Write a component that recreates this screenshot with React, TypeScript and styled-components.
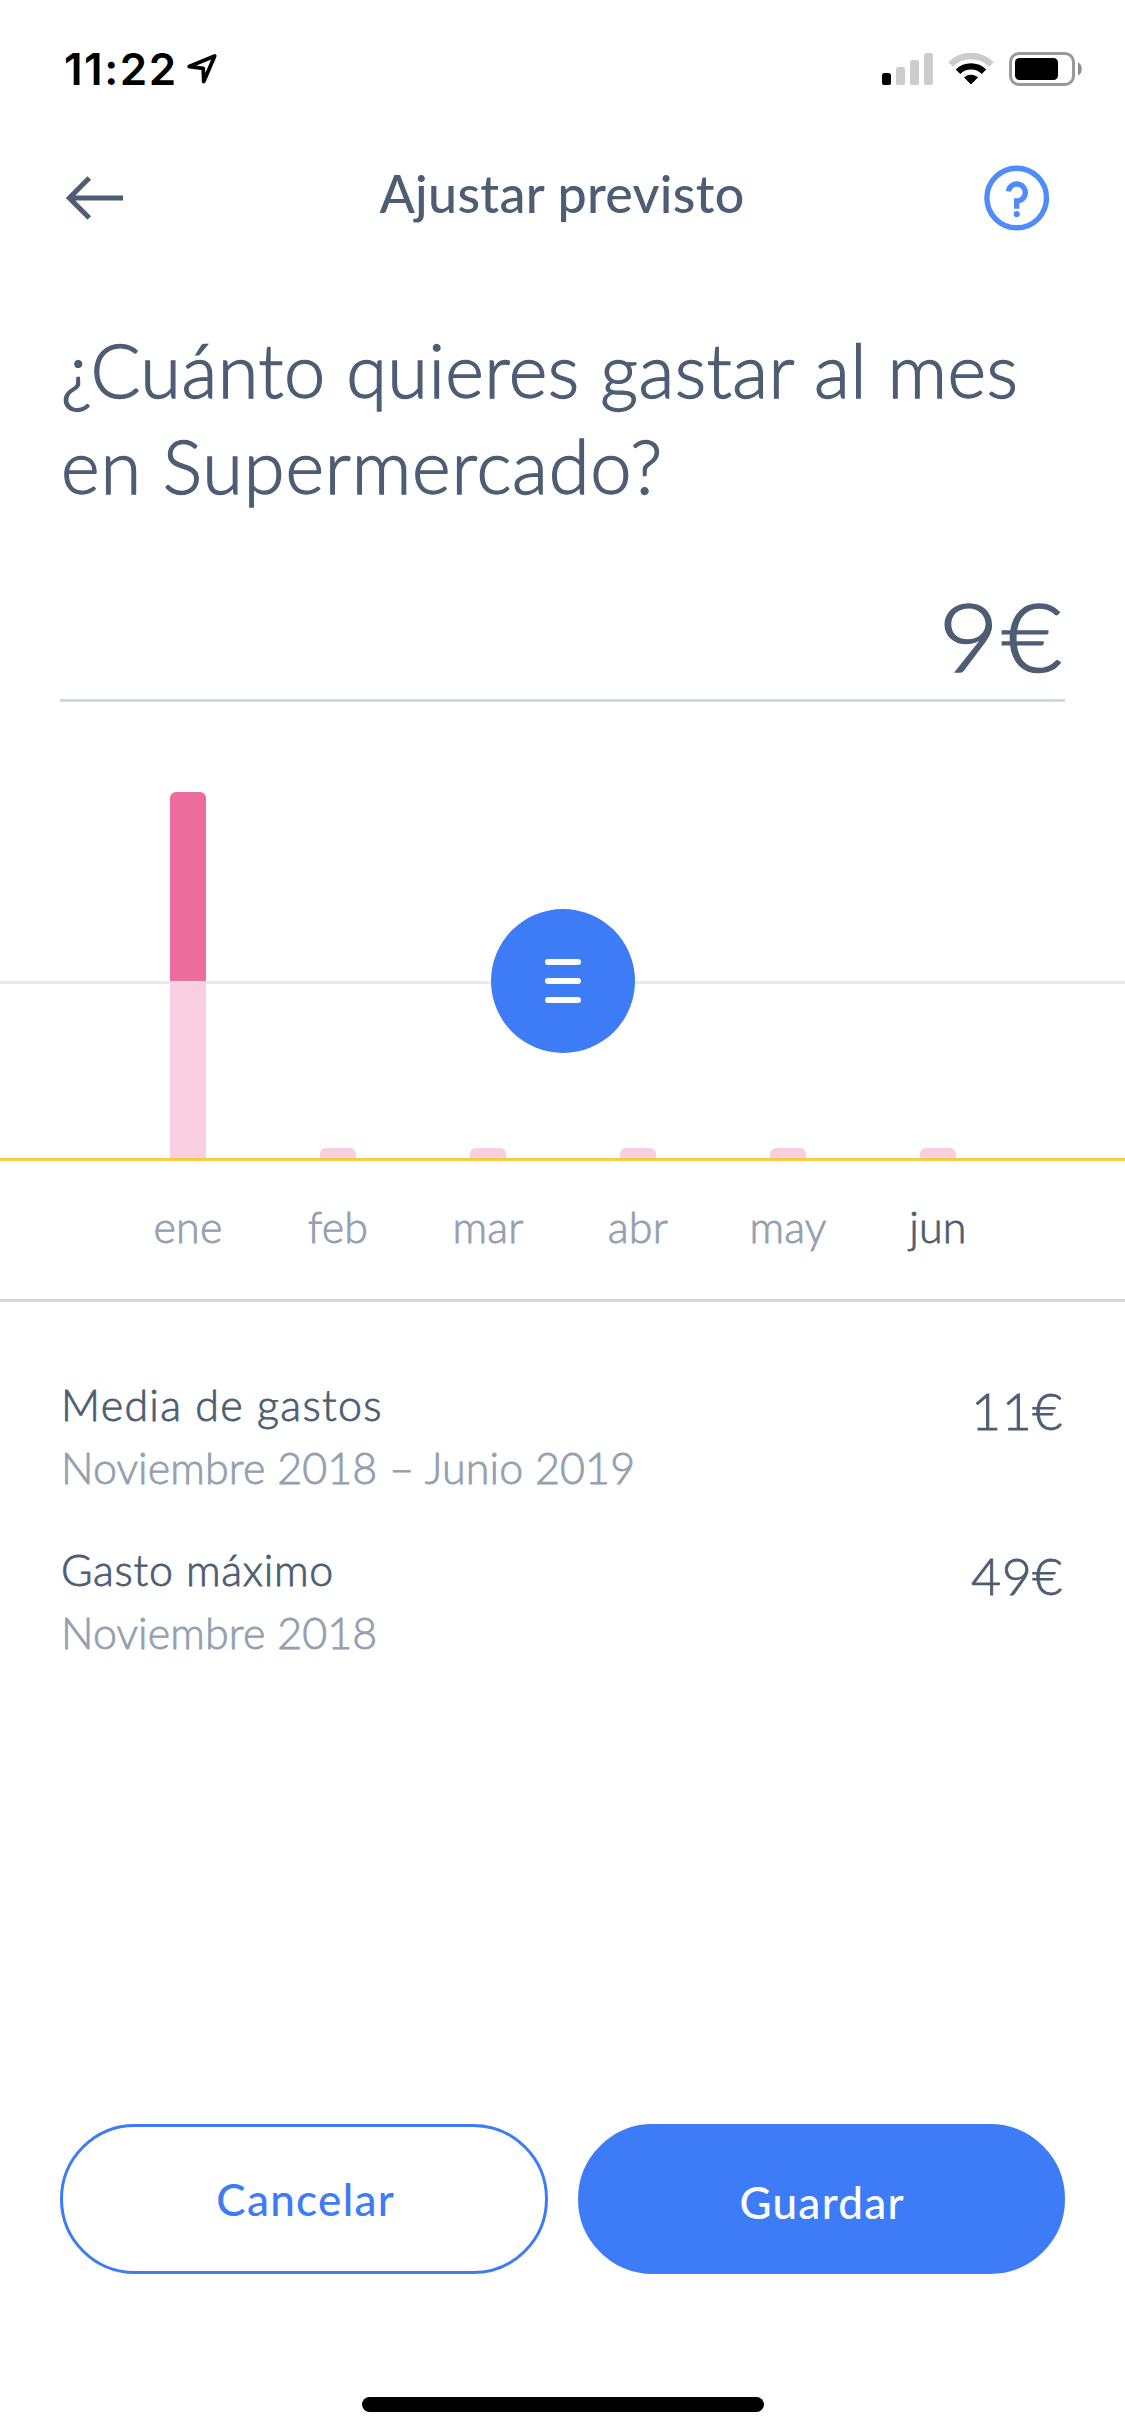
import React from 'react';
import styled, { createGlobalStyle } from 'styled-components';

const ink = '#4d5d73';
const muted = '#94a0af';
const blue = '#3d7bf7';
const divider = '#d0d7e3';

const GlobalStyle = createGlobalStyle`
  *, *::before, *::after { box-sizing: border-box; }
  body { margin: 0; background: #fff; }
`;

const Screen = styled.main`
  display: flex;
  flex-direction: column;
  width: 1125px;
  height: 2436px;
  overflow: hidden;
  background: #fff;
  color: ${ink};
  font-family: Lato, "Liberation Sans", sans-serif;
  font-weight: 300;
`;

const StatusBar = styled.div`
  display: flex;
  justify-content: space-between;
  height: 132px;
  padding: 46px 42px 0 64px;
  color: #000;
`;

const Clock = styled.div`
  display: flex;
  gap: 8px;
  font: 600 44px/46px Inter, sans-serif;
  letter-spacing: 1.5px;
`;

const LocationIcon = styled.svg`
  margin-top: 6px;
`;

const Indicators = styled.div`
  display: flex;
  align-items: flex-start;
  gap: 15px;
  padding-top: 6px;
`;

const NavBar = styled.header`
  display: grid;
  grid-template-columns: 66px 1fr 66px;
  align-items: center;
  height: 132px;
  padding: 0 75px 0 66px;
`;

const NavTitle = styled.h1`
  margin: 0;
  padding: 0 0 11px 8px;
  text-align: center;
  font-size: 52px;
  font-weight: 500;
  line-height: 60px;
  letter-spacing: 0.3px;
`;

const IconButton = styled.button`
  display: flex;
  align-items: center;
  height: 66px;
  padding: 0;
  border: 0;
  background: none;
`;

const Question = styled.h2`
  margin: 58px 60px 0 61px;
  font-size: 74px;
  font-weight: 300;
  line-height: 96px;
  -webkit-text-stroke: 1.3px ${ink};
`;

const QuestionLine = styled.span<{ $spacing: number }>`
  display: block;
  white-space: nowrap;
  letter-spacing: ${p => p.$spacing}px;
`;

const Amount = styled.div`
  display: flex;
  justify-content: flex-end;
  height: 115px;
  margin: 73px 60px 0;
  padding-right: 3px;
  border-bottom: 3px solid ${divider};
  font-size: 95px;
  line-height: 96px;
`;

const AmountValue = styled.span`
  height: 96px;
  letter-spacing: 2px;
  margin-right: -2px;
  transform: scaleX(1.1);
  transform-origin: right center;
  -webkit-text-stroke: 1.6px ${ink};
`;

const Chart = styled.section`
  border-bottom: 3px solid ${divider};
`;

const Plot = styled.div`
  position: relative;
  display: grid;
  grid-template-columns: repeat(6, 150px);
  align-items: end;
  justify-items: center;
  height: 459px;
  padding-left: 113px;
  border-bottom: 3px solid #f8ca45;
`;

const Bar = styled.div`
  display: flex;
  flex-direction: column;
  width: 36px;
  overflow: hidden;
  border-radius: 6px 6px 0 0;
`;

const Segment = styled.div<{ $over?: boolean }>`
  background: ${p => (p.$over ? '#ec6c9b' : '#f7cfe1')};
`;

const Threshold = styled.div`
  position: absolute;
  left: 0;
  right: 0;
  bottom: 174px;
  height: 3px;
  background: rgba(219, 226, 235, 0.69);
`;

const Handle = styled.button`
  position: absolute;
  left: 491px;
  bottom: 105px;
  display: flex;
  flex-direction: column;
  align-items: center;
  justify-content: center;
  gap: 13px;
  width: 144px;
  height: 144px;
  padding: 0;
  border: 0;
  border-radius: 50%;
  background: ${blue};
`;

const Grip = styled.span`
  width: 36px;
  height: 6px;
  border-radius: 3px;
  background: #fff;
`;

const Months = styled.div`
  display: grid;
  grid-template-columns: repeat(6, 150px);
  height: 138px;
  padding: 36px 0 0 113px;
`;

const Month = styled.span<{ $current?: boolean }>`
  color: ${p => (p.$current ? ink : muted)};
  text-align: center;
  font-size: 43px;
  line-height: 60px;
  letter-spacing: 0.2px;
  -webkit-text-stroke: 0.8px currentColor;
`;

const Stats = styled.section`
  display: flex;
  flex-direction: column;
  gap: 39px;
  padding: 71px 60px 0 61px;
`;

const Stat = styled.div`
  display: flex;
  justify-content: space-between;
  font-size: 43px;
  line-height: 63px;
  -webkit-text-stroke: 0.8px currentColor;
`;

const StatName = styled.div<{ $spacing: number }>`
  letter-spacing: ${p => p.$spacing}px;
`;

const StatPeriod = styled.div`
  color: ${muted};
  letter-spacing: 0.1px;
`;

const StatValue = styled.div`
  padding: 7px 2px 0 0;
  font-size: 52px;
  line-height: 60px;
  letter-spacing: 0.5px;
`;

const Footer = styled.footer`
  display: flex;
  flex-direction: column;
  align-items: center;
  gap: 123px;
  margin-top: auto;
  padding: 0 60px 24px;
`;

const Actions = styled.div`
  display: grid;
  grid-template-columns: 1fr 1fr;
  gap: 30px;
  width: 100%;
`;

const Action = styled.button<{ $primary?: boolean }>`
  display: flex;
  align-items: center;
  justify-content: center;
  height: 150px;
  padding: ${p => (p.$primary ? '6px 0 0 2px' : '0 0 1px 4px')};
  border: 3px solid ${blue};
  border-radius: 75px;
  background: ${p => (p.$primary ? blue : '#fff')};
  color: ${p => (p.$primary ? '#fff' : blue)};
  font: 500 44px/60px Lato, sans-serif;
  letter-spacing: 1.3px;
`;

const HomeIndicator = styled.div`
  width: 402px;
  height: 15px;
  border-radius: 8px;
  background: #000;
`;

const Signal = () => (
  <svg width="51" height="33" viewBox="0 0 51 33">
    <rect x="0" y="21" width="9" height="12" rx="2.6" fill="#000" />
    <rect x="14" y="15" width="9" height="18" rx="2.6" fill="#ccc" />
    <rect x="28" y="8" width="9" height="25" rx="2.6" fill="#ccc" />
    <rect x="42" y="1" width="9" height="32" rx="2.6" fill="#ccc" />
  </svg>
);

const Wifi = () => (
  <svg width="46" height="33" viewBox="0 0 46 33">
    <path d="M2.6 12.4A28.9 28.9 0 0 1 43.4 12.4" fill="none" stroke="#ccc" strokeWidth="6.4" />
    <path d="M10 19.8A18.4 18.4 0 0 1 36 19.8" fill="none" stroke="#000" strokeWidth="6.4" />
    <path d="M16.6 25.5A10 10 0 0 1 29.4 25.5L23 32Z" fill="#000" stroke="#000" strokeWidth="1" strokeLinejoin="round" />
  </svg>
);

const Battery = () => (
  <svg width="74" height="34" viewBox="0 0 74 34">
    <rect x="1.5" y="1.5" width="63" height="31" rx="8.5" fill="none" stroke="#999" strokeWidth="3" />
    <rect x="6" y="6" width="43" height="22" rx="4.5" fill="#000" />
    <path d="M69 10.5C74 12 74 22 69 23.5Z" fill="#8c8c8c" />
  </svg>
);

const months = [
  { name: 'ene', over: 189, within: 177 },
  { name: 'feb', over: 0, within: 10 },
  { name: 'mar', over: 0, within: 10 },
  { name: 'abr', over: 0, within: 10 },
  { name: 'may', over: 0, within: 10 },
  { name: 'jun', over: 0, within: 10 },
];

const stats = [
  { name: 'Media de gastos', period: 'Noviembre 2018 – Junio 2019', value: '11€', spacing: 1.3 },
  { name: 'Gasto máximo', period: 'Noviembre 2018', value: '49€', spacing: 0.7 },
];

export default function App() {
  return (
    <Screen>
      <GlobalStyle />
      <StatusBar>
        <Clock>
          11:22
          <LocationIcon width="32" height="33" viewBox="0 0 32 33">
            <path d="M28.7 4L3.2 14.6L17.2 16.3L17.8 29.6Z" fill="none" stroke="#000" strokeWidth="3.8" strokeLinejoin="round" />
          </LocationIcon>
        </Clock>
        <Indicators>
          <Signal />
          <Wifi />
          <Battery />
        </Indicators>
      </StatusBar>

      <NavBar>
        <IconButton aria-label="Volver">
          <svg width="57" height="44" viewBox="0 0 57 44">
            <path d="M23.3 2L3.3 22L23.3 42M3 22H57" fill="none" stroke={ink} strokeWidth="5" />
          </svg>
        </IconButton>
        <NavTitle>Ajustar previsto</NavTitle>
        <IconButton aria-label="Ayuda">
          <svg width="66" height="66" viewBox="0 0 66 66">
            <circle cx="32.7" cy="33" r="29.8" fill="none" stroke="#4f8bf9" strokeWidth="5.4" />
            <path d="M24.4 26.4A8.5 8.5 0 1 1 32.7 36V43.8" fill="none" stroke="#4f8bf9" strokeWidth="5.4" />
            <circle cx="32.7" cy="49" r="3.1" fill="#4f8bf9" />
          </svg>
        </IconButton>
      </NavBar>

      <Question>
        <QuestionLine $spacing={0.42}>¿Cuánto quieres gastar al mes</QuestionLine>
        <QuestionLine $spacing={0.8}>en Supermercado?</QuestionLine>
      </Question>

      <Amount>
        <AmountValue>9€</AmountValue>
      </Amount>

      <Chart>
        <Plot>
          {months.map(m => (
            <Bar key={m.name}>
              <Segment $over style={{ height: m.over }} />
              <Segment style={{ height: m.within }} />
            </Bar>
          ))}
          <Threshold />
          <Handle aria-label="Mover límite">
            <Grip />
            <Grip />
            <Grip />
          </Handle>
        </Plot>
        <Months>
          {months.map(m => (
            <Month key={m.name} $current={m.name === 'jun'}>{m.name}</Month>
          ))}
        </Months>
      </Chart>

      <Stats>
        {stats.map(s => (
          <Stat key={s.name}>
            <div>
              <StatName $spacing={s.spacing}>{s.name}</StatName>
              <StatPeriod>{s.period}</StatPeriod>
            </div>
            <StatValue>{s.value}</StatValue>
          </Stat>
        ))}
      </Stats>

      <Footer>
        <Actions>
          <Action>Cancelar</Action>
          <Action $primary>Guardar</Action>
        </Actions>
        <HomeIndicator />
      </Footer>
    </Screen>
  );
}
